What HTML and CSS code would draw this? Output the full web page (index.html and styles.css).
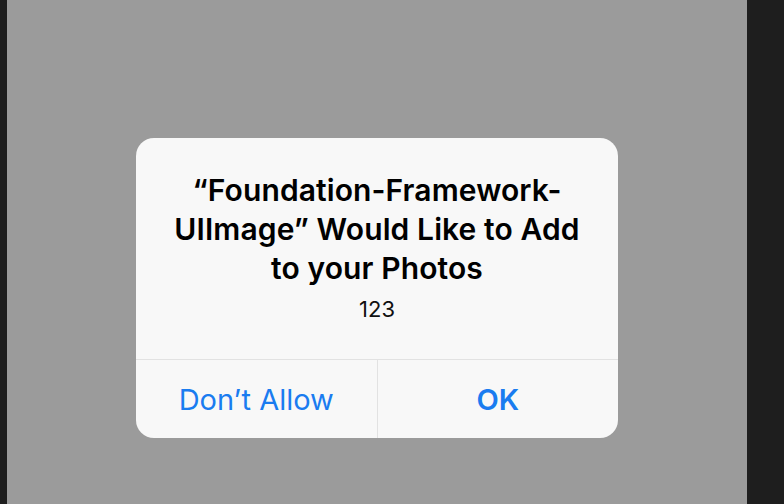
FILE: index.html
```html
<!DOCTYPE html>
<html lang="en">
<head>
  <meta charset="UTF-8">
  <title>Alert</title>
  <link rel="stylesheet" href="styles.css">
</head>
<body>
  <div class="edge-left"></div>
  <main class="screen">
    <div class="alert">
      <div class="alert-body">
        <h1 class="alert-title">“Foundation-Framework-<br>UIImage” Would Like to Add<br>to your Photos</h1>
        <p class="alert-message">123</p>
      </div>
      <div class="alert-actions">
        <button class="alert-btn">Don’t Allow</button>
        <button class="alert-btn alert-btn-bold">OK</button>
      </div>
    </div>
  </main>
  <div class="edge-right"></div>
</body>
</html>
```

FILE: styles.css
```css
html, body {
  margin: 0;
  padding: 0;
  height: 100%;
}
body {
  display: flex;
  background-color: #1e1e1e;
  font-family: Inter, "Open Sans", sans-serif;
}
.edge-left {
  width: 7px;
}
.edge-right {
  flex: 1;
}
.screen {
  width: 740px;
  background-color: #9b9b9b;
  display: flex;
  justify-content: center;
  align-items: flex-start;
  padding-top: 138px;
  box-sizing: border-box;
}
.alert {
  width: 482px;
  height: 300px;
  background-color: #f8f8f8;
  border-radius: 18px;
  display: flex;
  flex-direction: column;
  overflow: hidden;
}
.alert-body {
  height: 222px;
  box-sizing: border-box;
  padding-top: 33px;
  text-align: center;
  border-bottom: 1px solid #e2e2e2;
}
.alert-title {
  margin: 0;
  font-size: 30px;
  font-weight: 600;
  line-height: 39px;
  letter-spacing: 0.1px;
  color: #000;
}
.alert-message {
  margin: 6px 0 0;
  font-size: 22px;
  line-height: 30px;
  color: #111;
}
.alert-actions {
  flex: 1;
  display: flex;
}
.alert-btn {
  flex: 1;
  border: none;
  background: none;
  font-family: inherit;
  font-size: 29px;
  color: #1a7cf0;
  padding: 0;
  cursor: pointer;
}
.alert-btn + .alert-btn {
  border-left: 1px solid #e2e2e2;
}
.alert-btn-bold {
  font-weight: 600;
}
```
